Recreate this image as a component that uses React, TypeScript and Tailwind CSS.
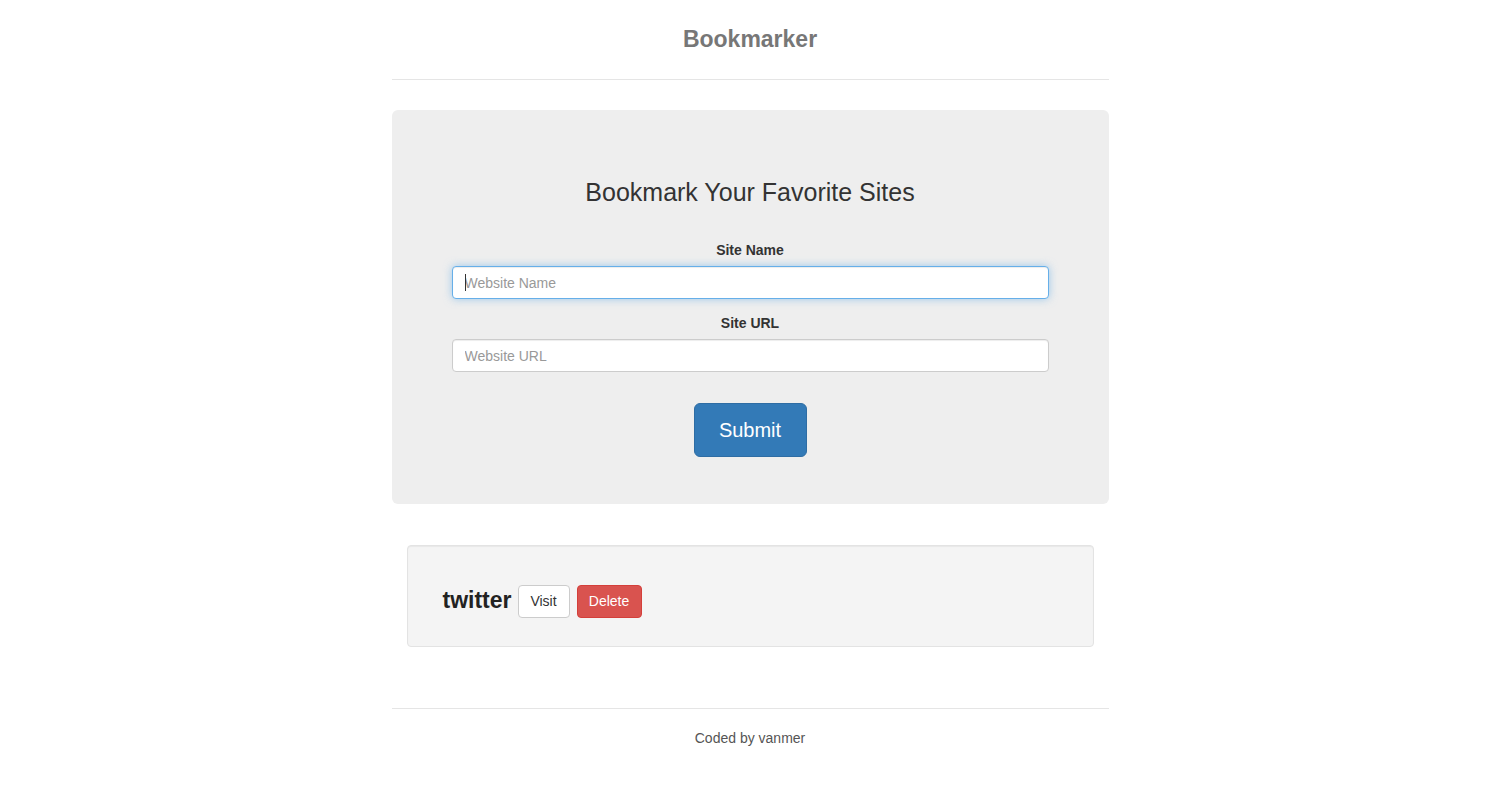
import React from "react";

// Simple bookmark manager page (Bootstrap narrow-jumbotron look)
const bookmarks = [{ name: "twitter", url: "https://twitter.com" }];

export default function App() {
  return (
    <div className="min-h-screen bg-white font-['Liberation_Sans',Arial,sans-serif] text-[14px] text-[#333]">
      <div className="mx-auto w-[717px] pt-[19px]">
        {/* Header */}
        <header className="mb-[30px] border-b border-[#e5e5e5] pb-5">
          <h3 className="text-center text-[23px] font-bold leading-[40px] text-[#777]">
            Bookmarker
          </h3>
        </header>

        {/* Form */}
        <div className="rounded-[6px] bg-[#eee] px-[60px] pb-[47px] pt-[69px]">
          <h2 className="text-center text-[25px] leading-[26px] text-[#333]">
            Bookmark Your Favorite Sites
          </h2>
          <form className="mt-[35px] flex flex-col" onSubmit={(e) => e.preventDefault()}>
            <label className="mb-[6px] text-center text-[14px] font-bold leading-5">Site Name</label>
            <div className="relative">
              <input
                type="text"
                placeholder="Website Name"
                className="block h-[33px] w-full rounded-[4px] border border-[#66afe9] bg-white px-3 text-[14px] outline-none shadow-[inset_0_1px_1px_rgba(0,0,0,0.075),0_0_8px_rgba(102,175,233,0.6)] placeholder:text-[#999]"
              />
              <span className="absolute left-[13px] top-[8px] h-[17px] w-px bg-[#333]" />
            </div>
            <label className="mb-[6px] mt-[14px] text-center text-[14px] font-bold leading-5">Site URL</label>
            <input
              type="text"
              placeholder="Website URL"
              className="block h-[33px] w-full rounded-[4px] border border-[#ccc] bg-white px-3 text-[14px] outline-none shadow-[inset_0_1px_1px_rgba(0,0,0,0.075)] placeholder:text-[#999]"
            />
            <div className="mt-[31px] flex justify-center">
              <button
                type="submit"
                className="h-[54px] w-[113px] rounded-[6px] border border-[#2e6da4] bg-[#337ab7] text-[20px] text-white"
              >
                Submit
              </button>
            </div>
          </form>
        </div>

        {/* Results */}
        <div className="mx-[15px] mt-[41px] flex flex-col gap-4">
          {bookmarks.map((b) => (
            <div
              key={b.name}
              className="flex h-[102px] items-center rounded-[4px] border border-[#e3e3e3] bg-[#f4f4f4] pl-[35px] pt-[11px] shadow-[inset_0_1px_1px_rgba(0,0,0,0.05)]"
            >
              <h3 className="mb-[4px] mr-[6px] text-[23px] font-bold leading-[26px] text-[#222]">{b.name}</h3>
              <a
                href={b.url}
                className="mr-[7px] flex h-[33px] w-[52px] items-center justify-center rounded-[4px] border border-[#ccc] bg-white text-[14px] text-[#333]"
              >
                Visit
              </a>
              <button className="h-[33px] w-[65px] rounded-[4px] border border-[#d43f3a] bg-[#d9534f] text-[14px] text-white">
                Delete
              </button>
            </div>
          ))}
        </div>

        {/* Footer */}
        <footer className="mt-[61px] border-t border-[#e5e5e5] pt-[19px]">
          <p className="text-center text-[14px] leading-5 text-[#555]">Coded by vanmer</p>
        </footer>
      </div>
    </div>
  );
}
